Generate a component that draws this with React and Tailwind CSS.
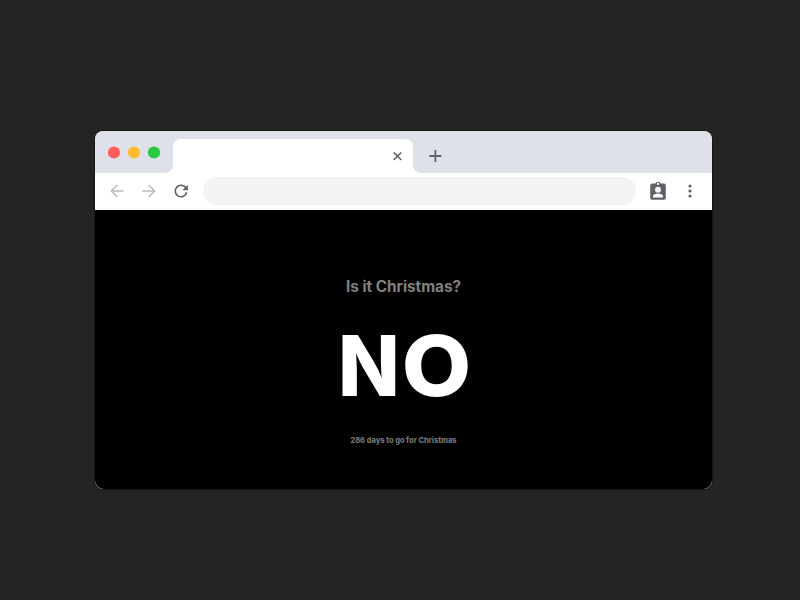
function TabCurve({ flip }) {
  return (
    <svg width="8" height="8" viewBox="0 0 8 8" className={flip ? "-scale-x-100" : ""}>
      <path d="M8 0A8 8 0 0 1 0 8H8Z" fill="#fff" />
    </svg>
  );
}

function Arrow({ flip }) {
  return (
    <svg width="14" height="14" viewBox="0 0 14 14" className={flip ? "-scale-x-100" : ""} fill="none" stroke="#babbbd" strokeWidth="1.5">
      <path d="M13.5 7H1.5M7.3 1L1.3 7L7.3 13" />
    </svg>
  );
}

function TabBar() {
  return (
    <div className="flex h-[42px] items-end bg-[#dee1e9]">
      <div className="h-full w-[70px] pl-[13px] pt-[15px]">
        <svg width="52" height="13" viewBox="0 0 52 13">
          <circle cx="6" cy="6.5" r="6.1" fill="#ff5f57" />
          <circle cx="26" cy="6.5" r="6.1" fill="#ffbd2e" />
          <circle cx="46" cy="6.5" r="6.1" fill="#28ca42" />
        </svg>
      </div>
      <TabCurve />
      <div className="flex h-[34px] w-60 items-center justify-end rounded-t-lg bg-white pr-[11px]">
        <svg width="9" height="9" viewBox="0 0 9 9" stroke="#5f6368" strokeWidth="1.5">
          <path d="M0.7 0.4L8.3 8M8.3 0.4L0.7 8" />
        </svg>
      </div>
      <TabCurve flip />
      <svg width="13" height="12" viewBox="0 0 13 12" className="mb-[11px] ml-2" stroke="#5f6368" strokeWidth="1.8">
        <path d="M6.4 0V12M0.4 6H12.4" />
      </svg>
    </div>
  );
}

function Toolbar() {
  return (
    <div className="flex h-[37px] items-center bg-white pb-px pl-[15px]">
      <Arrow />
      <div className="ml-[18px]"><Arrow flip /></div>
      <svg width="20" height="20" viewBox="0 0 20 20" className="ml-[15px]">
        <path d="M14.9 6.8A5.8 5.8 0 1 0 15.7 11.3" fill="none" stroke="#5f6368" strokeWidth="1.6" />
        <path d="M16.9 3.7V9.3H11.3Z" fill="#5f6368" />
      </svg>
      <div className="ml-3 h-7 w-[433px] rounded-full bg-[#f1f3f4]" />
      <svg width="16" height="20" viewBox="0 0 16 20" className="ml-[14px]">
        <path fillRule="evenodd" fill="#5f6368" d="M2 2.6H5.4A2.7 2.7 0 0 1 10.6 2.6H14A1.8 1.8 0 0 1 15.8 4.4V17A1.8 1.8 0 0 1 14 18.8H2A1.8 1.8 0 0 1 0.2 17V4.4A1.8 1.8 0 0 1 2 2.6ZM8 1.8A1.1 1.1 0 1 0 8 4A1.1 1.1 0 1 0 8 1.8ZM8 5.8A2.9 2.9 0 1 0 8 11.6A2.9 2.9 0 1 0 8 5.8ZM3 16.6H13V15.2C13 13.5 10 12.5 8 12.5S3 13.5 3 15.2Z" />
      </svg>
      <svg width="4" height="14" viewBox="0 0 4 14" className="ml-[22px]" fill="#5f6368">
        <circle cx="2" cy="2" r="1.6" />
        <circle cx="2" cy="7" r="1.6" />
        <circle cx="2" cy="12" r="1.6" />
      </svg>
    </div>
  );
}

export default function App() {
  return (
    <div className="h-[600px] w-[800px] bg-[#242424] pl-[95px] pt-[131px] font-['Inter',sans-serif]">
      <div className="h-[358px] w-[617px] overflow-hidden rounded-lg bg-[#999] shadow-[0_0_1px_1px_rgba(0,0,0,0.35)]">
        <TabBar />
        <Toolbar />
        <div className="flex h-[279px] flex-col items-center whitespace-nowrap rounded-b-[9px] bg-black pt-[66.5px]">
          <h1 className="h-5 text-[15.25px] font-bold leading-5 text-[#808080]">Is it Christmas?</h1>
          <div className="mt-[19px] flex h-[100px] justify-center gap-[2px] text-[84px] font-extrabold leading-[100px] text-white">
            <span className="origin-left scale-x-[0.96]">N</span>
            <span className="origin-center scale-x-[1.07]">O</span>
          </div>
          <p className="mt-[19px] h-3 text-[7.45px] font-extrabold leading-3 text-[#747474]">286 days to go for Christmas</p>
        </div>
      </div>
    </div>
  );
}
